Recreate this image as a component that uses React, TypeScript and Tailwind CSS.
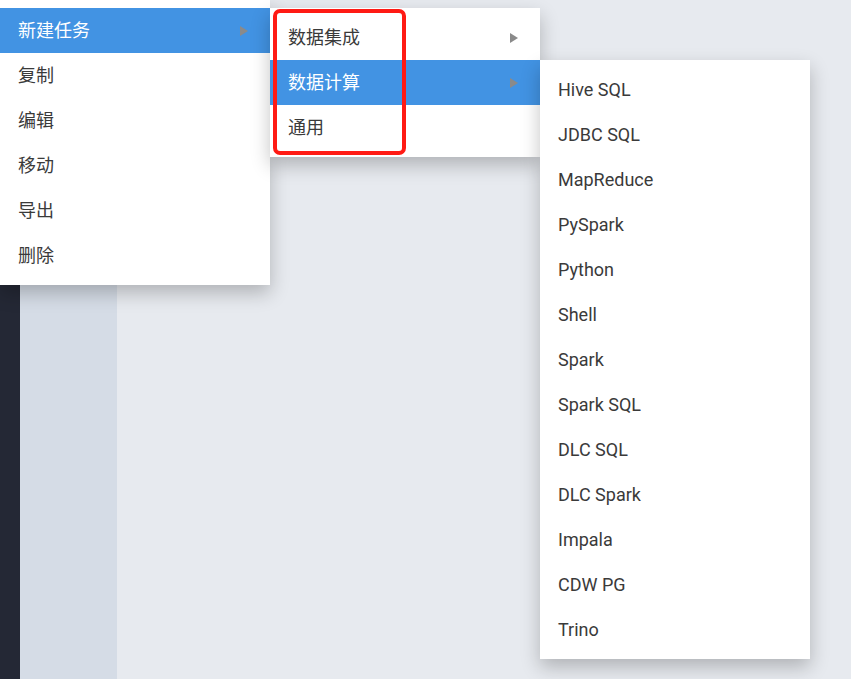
const FONT = "font-['Roboto','Noto_Sans_CJK_SC',sans-serif]";

type Item = { label: string; sub?: boolean; active?: boolean };

const MAIN: Item[] = [
  { label: "新建任务", sub: true, active: true },
  { label: "复制" },
  { label: "编辑" },
  { label: "移动" },
  { label: "导出" },
  { label: "删除" },
];

const NEW_TASK: Item[] = [
  { label: "数据集成", sub: true },
  { label: "数据计算", sub: true, active: true },
  { label: "通用" },
];

const COMPUTE = [
  "Hive SQL",
  "JDBC SQL",
  "MapReduce",
  "PySpark",
  "Python",
  "Shell",
  "Spark",
  "Spark SQL",
  "DLC SQL",
  "DLC Spark",
  "Impala",
  "CDW PG",
  "Trino",
].map((label) => ({ label }));

function Caret() {
  return (
    <svg width="8" height="10" viewBox="0 0 8 10" className="shrink-0">
      <path d="M0 0 L8 5 L0 10 Z" fill="#8a8a8a" />
    </svg>
  );
}

function Menu({ items, className }: { items: Item[]; className: string }) {
  return (
    <div
      className={`absolute w-[270px] bg-white shadow-[0_8px_18px_rgba(0,0,0,0.24)] ${className}`}
    >
      {items.map((it) => (
        <div
          key={it.label}
          className={`flex h-[45px] items-center justify-between pl-[18px] pr-[22px] text-[18px] ${
            it.active ? "bg-[#4293e3] text-white" : "text-[#3a3a3a]"
          }`}
        >
          <span>{it.label}</span>
          {it.sub && <Caret />}
        </div>
      ))}
    </div>
  );
}

export default function App() {
  return (
    <div className={`relative h-[679px] w-[851px] overflow-hidden ${FONT}`}>
      {/* page behind the context menu */}
      <div className="flex h-full">
        <div className="w-5 bg-[#242835]" />
        <div className="w-[97px] bg-[#d5dce6]" />
        <div className="flex-1 bg-[#e7eaef]" />
      </div>

      <Menu items={MAIN} className="left-0 top-0 pt-2 pb-[7px]" />
      <Menu items={NEW_TASK} className="left-[270px] top-2 py-[7px]" />
      <Menu items={COMPUTE} className="left-[540px] top-[60px] py-[7px]" />

      {/* annotation */}
      <div className="pointer-events-none absolute left-[273px] top-[9px] h-[146px] w-[133px] rounded-[7px] border-4 border-[#ff1a14]" />
    </div>
  );
}
